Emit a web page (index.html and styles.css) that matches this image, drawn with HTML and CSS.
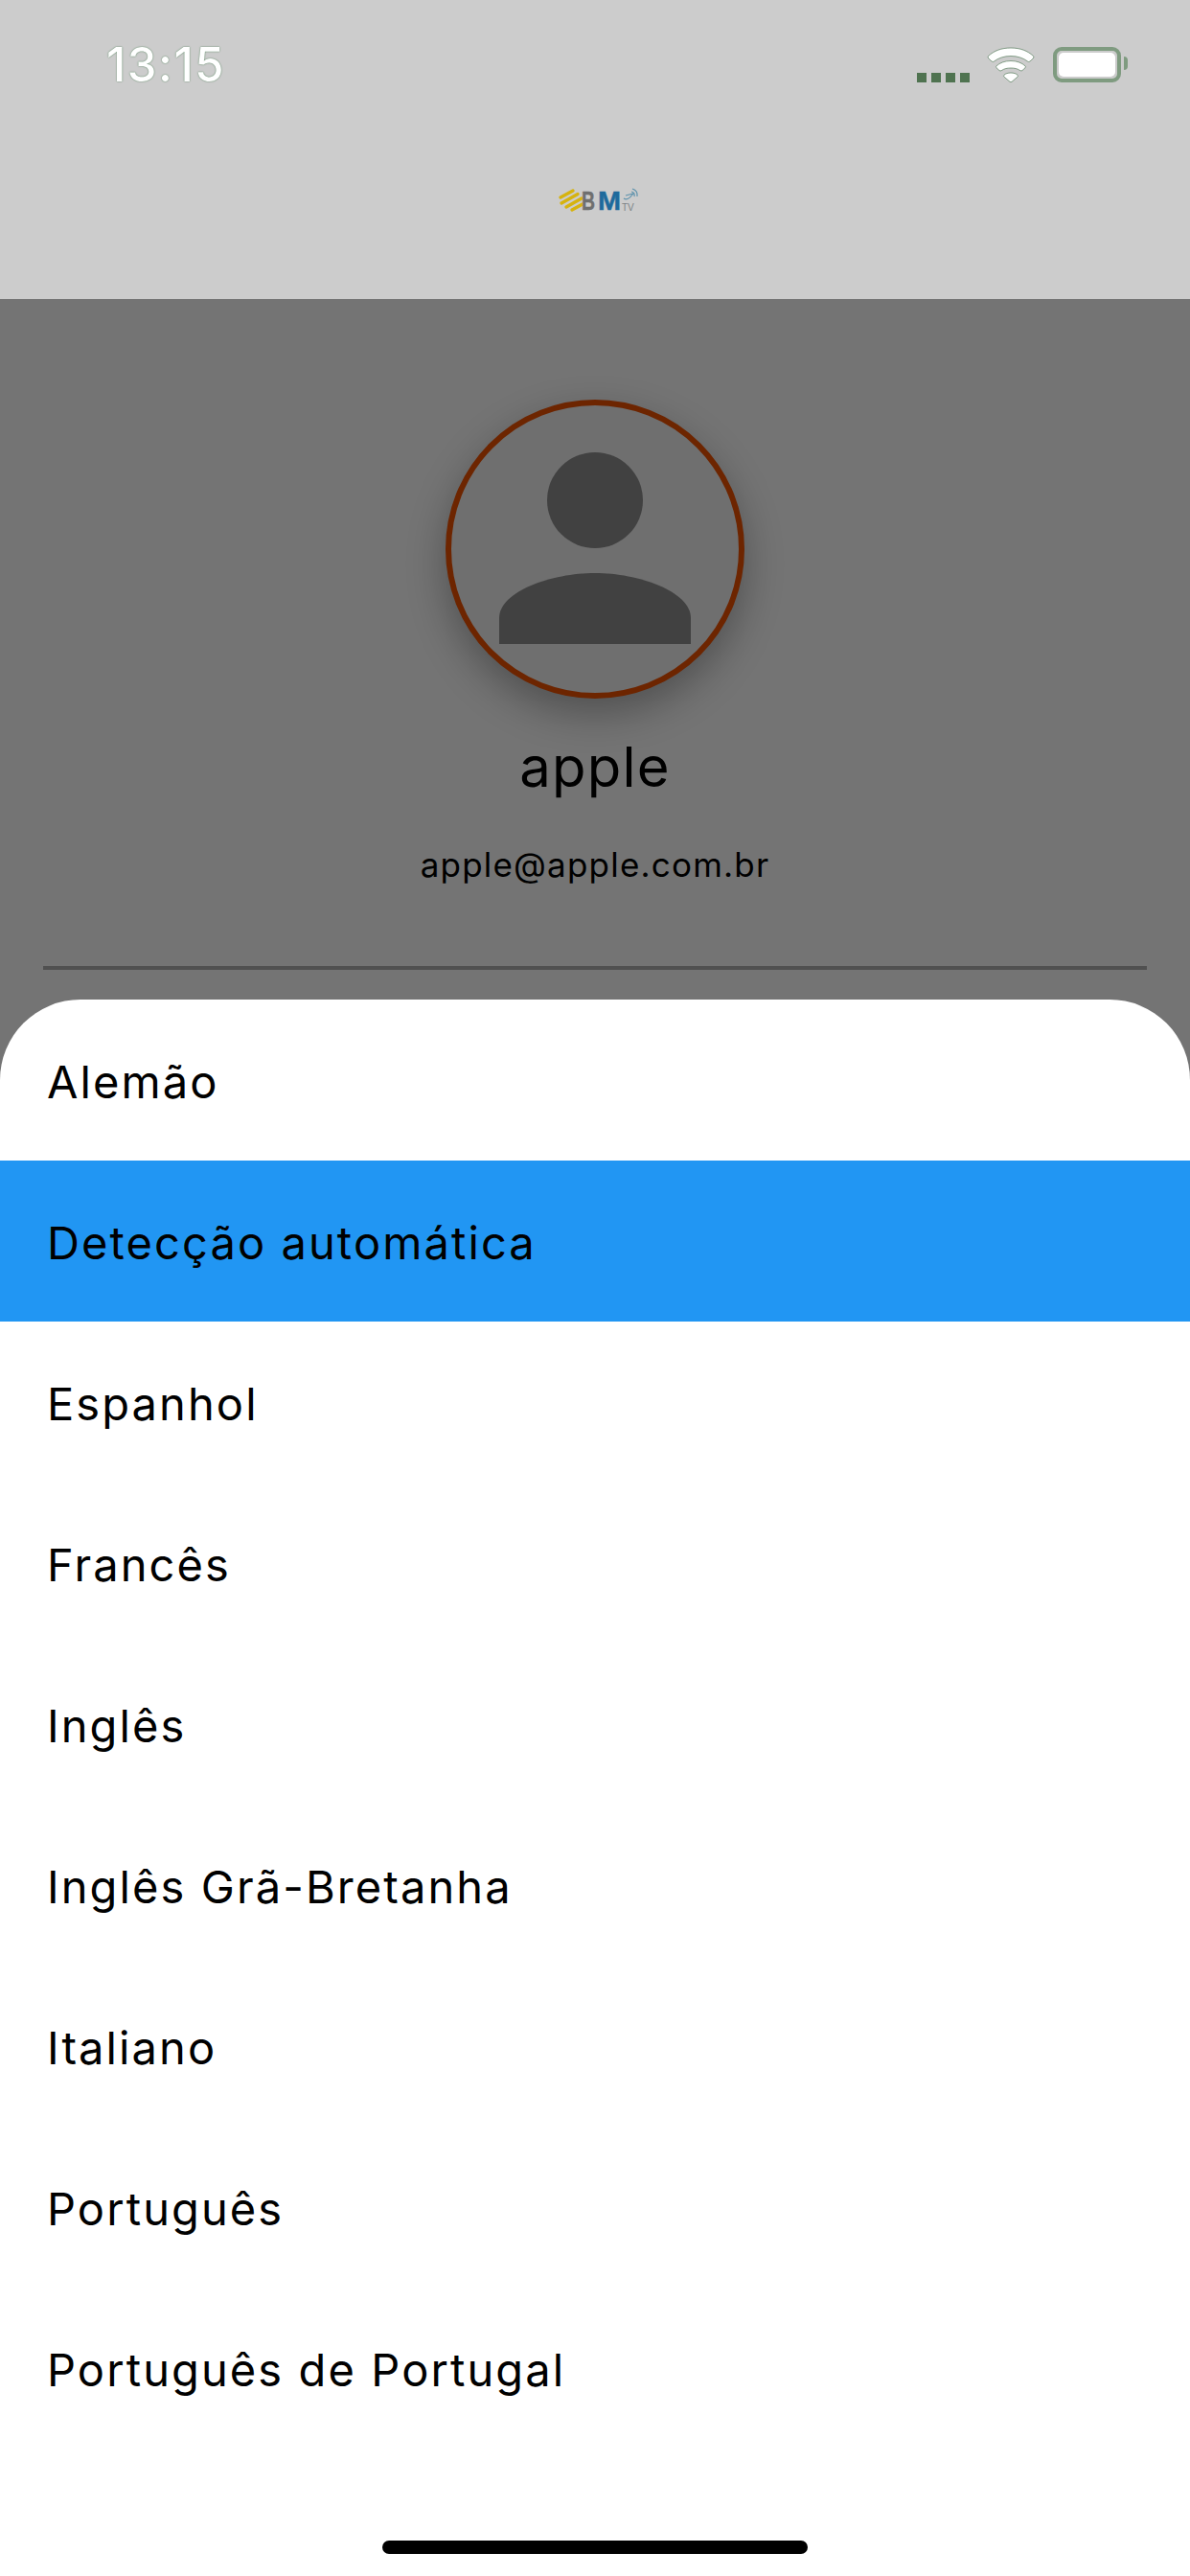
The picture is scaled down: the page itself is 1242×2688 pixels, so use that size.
FILE: index.html
```html
<!DOCTYPE html>
<html lang="pt-BR">
<head>
    <meta charset="UTF-8">
    <meta name="viewport" content="width=device-width, initial-scale=1.0">
    <title>Perfil</title>
    <link rel="stylesheet" href="styles.css">
</head>
<body>
    <div class="screen">
        <header class="top-bar">
            <div class="status-bar">
                <span class="clock">13:15</span>
                <div class="status-icons">
                    <div class="signal"><i></i><i></i><i></i><i></i></div>
                    <svg class="wifi" width="50" height="37" viewBox="0 0 50 37">
                        <path d="M25 1C15 1 7.500 4 1.500 9.500Q0.500 10.700 1.800 12L5 15Q6.300 16 7.500 15C12 11.500 18 9.500 25 9.500S38 11.500 42.500 15Q43.700 16 45 15L48.200 12Q49.500 10.700 48.500 9.500C42.500 4 35 1 25 1Z"/>
                        <path d="M25 14.500C19 14.500 13.500 16.500 10 19.800Q9 20.800 10 21.800L13 24.500Q14 25.400 15.200 24.600C18 22.700 21 22 25 22S32 22.700 34.800 24.600Q36 25.400 37 24.500L40 21.800Q41 20.800 40 19.800C36.500 16.500 31 14.500 25 14.500Z"/>
                        <path d="M25 27C22 27 19.500 27.800 18 29.200Q17 30.200 18 31.200L24 36.300Q25 37 26 36.300L32 31.200Q33 30.200 32 29.200C30.500 27.800 28 27 25 27Z"/>
                    </svg>
                    <div class="battery"><div class="battery-level"></div></div>
                </div>
            </div>
            <div class="logo-row">
                <svg class="logo" width="92" height="36" viewBox="0 0 92 36">
                    <g class="logo-stripes">
                        <line x1="10" y1="16" x2="23" y2="9"/>
                        <line x1="11" y1="22" x2="28" y2="12.500"/>
                        <line x1="16" y1="26" x2="32" y2="17"/>
                        <line x1="22" y1="29" x2="33" y2="23"/>
                    </g>
                    <text class="logo-b" x="32" y="29" textLength="14" lengthAdjust="spacingAndGlyphs">B</text>
                    <text class="logo-m" x="49" y="29" textLength="24" lengthAdjust="spacingAndGlyphs">M</text>
                    <text class="logo-tv" x="74" y="30">TV</text>
                    <path class="logo-dish" d="M76 17Q80 20 86 12L78 14M84 10Q88 11 87 15M85 7Q91 9 90 15"/>
                </svg>
            </div>
        </header>

        <main class="profile">
            <div class="avatar">
                <svg class="avatar-icon" width="200" height="200" viewBox="0 0 200 200">
                    <circle cx="100" cy="50" r="50"/>
                    <path d="M0 200V173C0 145 55 126 100 126S200 145 200 173V200Z"/>
                </svg>
            </div>
            <div class="user-name">apple</div>
            <div class="user-email">apple@apple.com.br</div>
            <div class="divider"></div>
        </main>

        <section class="sheet">
            <div class="sheet-item">Alemão</div>
            <div class="sheet-item selected">Detecção automática</div>
            <div class="sheet-item">Espanhol</div>
            <div class="sheet-item">Francês</div>
            <div class="sheet-item">Inglês</div>
            <div class="sheet-item">Inglês Grã-Bretanha</div>
            <div class="sheet-item">Italiano</div>
            <div class="sheet-item">Português</div>
            <div class="sheet-item">Português de Portugal</div>
        </section>

        <div class="home-indicator"></div>
    </div>
</body>
</html>
```

FILE: styles.css
```css
body {
    margin: 0;
    font-family: Inter, "Liberation Sans", sans-serif;
    background-color: #737373;
}
.screen {
    position: relative;
    width: 1242px;
    height: 2688px;
    overflow: hidden;
    background-color: #747474;
}
.top-bar {
    height: 312px;
    background-color: #cccccc;
    box-sizing: border-box;
}
.status-bar {
    display: flex;
    justify-content: space-between;
    align-items: center;
    height: 134px;
    padding: 0 64px 0 111px;
}
.clock {
    font-size: 49px;
    font-weight: 500;
    line-height: 1;
    letter-spacing: 1.5px;
    color: #ffffff;
    text-shadow: 0 0 1.5px #2f6b3a;
}
.status-icons {
    display: flex;
    align-items: flex-end;
}
.signal {
    display: flex;
    gap: 5px;
}
.signal i {
    width: 10px;
    height: 10px;
    background-color: #4f7350;
}
.wifi {
    margin-left: 18px;
    fill: #ffffff;
    stroke: #3f6b47;
    stroke-width: 0.6;
}
.battery {
    position: relative;
    box-sizing: border-box;
    width: 71px;
    height: 37px;
    margin-left: 19px;
    margin-right: 8px;
    padding: 2px;
    border: 4px solid #7f9b80;
    border-radius: 9px;
    background-color: #cccccc;
}
.battery::after {
    content: "";
    position: absolute;
    right: -11px;
    top: 6px;
    width: 4px;
    height: 14px;
    background-color: #7f9b80;
    border-radius: 0 6px 6px 0;
}
.battery-level {
    height: 100%;
    background-color: #ffffff;
    border-radius: 5px;
}
.logo-row {
    display: flex;
    justify-content: center;
    padding-top: 56px;
}
.logo-stripes line {
    stroke: #d6b30e;
    stroke-width: 3.4;
    stroke-linecap: round;
}
.logo-b, .logo-m {
    font-family: "Liberation Sans", sans-serif;
    font-weight: 700;
    font-size: 28px;
    stroke-width: 0.5;
}
.logo-b { fill: #6f6f6f; stroke: #6f6f6f; }
.logo-m { fill: #1d6a9c; stroke: #1d6a9c; }
.logo-tv {
    font-family: "Liberation Sans", sans-serif;
    font-size: 10px;
    fill: #7d8487;
}
.logo-dish {
    fill: none;
    stroke: #5f93ad;
    stroke-width: 1.2;
}
.profile {
    display: flex;
    flex-direction: column;
    align-items: center;
    padding-top: 105px;
}
.avatar {
    display: flex;
    justify-content: center;
    box-sizing: border-box;
    width: 312px;
    height: 312px;
    padding-top: 49px;
    border: 6px solid #6d2500;
    border-radius: 50%;
    background-color: #6f6f6f;
    box-shadow: 0 16px 40px rgba(0,0,0,0.3);
}
.avatar-icon {
    fill: #414141;
}
.user-name {
    margin-top: 37px;
    font-size: 58px;
    line-height: 68px;
    letter-spacing: 1.2px;
    color: #000000;
}
.user-email {
    margin-top: 47px;
    font-size: 35px;
    line-height: 42px;
    letter-spacing: 1.2px;
    color: #000000;
}
.divider {
    width: 1152px;
    height: 4px;
    margin-top: 85px;
    background-color: #505050;
}
.sheet {
    position: absolute;
    left: 0;
    right: 0;
    top: 1043px;
    bottom: 0;
    background-color: #ffffff;
    border-radius: 84px 84px 0 0;
    overflow: hidden;
}
.sheet-item {
    display: flex;
    align-items: center;
    box-sizing: border-box;
    height: 168px;
    padding: 3px 0 0 49px;
    font-size: 47px;
    letter-spacing: 2.1px;
    color: #000000;
}
.sheet-item.selected {
    background-color: #2196f3;
}
.home-indicator {
    position: absolute;
    left: 399px;
    bottom: 23px;
    width: 444px;
    height: 14px;
    border-radius: 7px;
    background-color: #000000;
}
```
